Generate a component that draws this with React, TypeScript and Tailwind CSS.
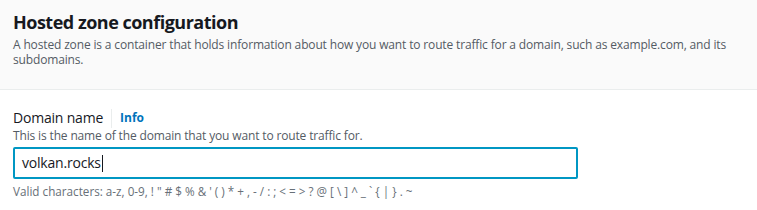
import React from "react";

export default function App() {
  return (
    <div className="w-[757px] h-[210px] bg-white overflow-hidden text-[#16191f]" style={{ fontFamily: "'Open Sans', 'Noto Sans', sans-serif" }}>
      <div className="bg-[#fafafa] border-b border-[#eaeded] px-[13px] pt-[11px] h-[90px]">
        <h2 className="text-[18px] leading-[22px] font-bold tracking-[-0.5px] text-[#16191f]">Hosted zone configuration</h2>
        <p className="mt-[4px] w-[728px] text-[12px] leading-[15px] tracking-[-0.15px] text-[#545b64]">
          A hosted zone is a container that holds information about how you want to route traffic for a domain, such as example.com, and its subdomains.
        </p>
      </div>
      <div className="px-[13px] pt-[18px]">
        <div className="flex items-center h-[20px]">
          <span className="text-[14px] leading-[20px] tracking-[-0.2px] text-[#16191f]">Domain name</span>
          <span className="mx-[8px] w-px h-[19px] bg-[#eaeded]" />
          <a className="text-[12px] leading-[20px] font-bold text-[#0073bb]">Info</a>
        </div>
        <p className="text-[12px] leading-[16px] tracking-[-0.15px] text-[#545b64]">This is the name of the domain that you want to route traffic for.</p>
        <div className="mt-[3px] w-[565px] h-[32px] border-2 border-[#0097c3] rounded-[2px] flex items-center pl-[7px]">
          <span className="text-[14px] leading-[20px] tracking-[-0.2px] text-[#16191f]">volkan.rocks</span>
          <span className="w-px h-[17px] bg-[#16191f] ml-[1px]" />
        </div>
        <p className="mt-[4px] text-[11.7px] leading-[16px] text-[#687078]">
          Valid characters: a-z, 0-9, ! " # $ % &amp; ' ( ) * + , - / : ; &lt; = &gt; ? @ [ \ ] ^ _ ` {"{"} | {"}"} . ~
        </p>
      </div>
    </div>
  );
}
